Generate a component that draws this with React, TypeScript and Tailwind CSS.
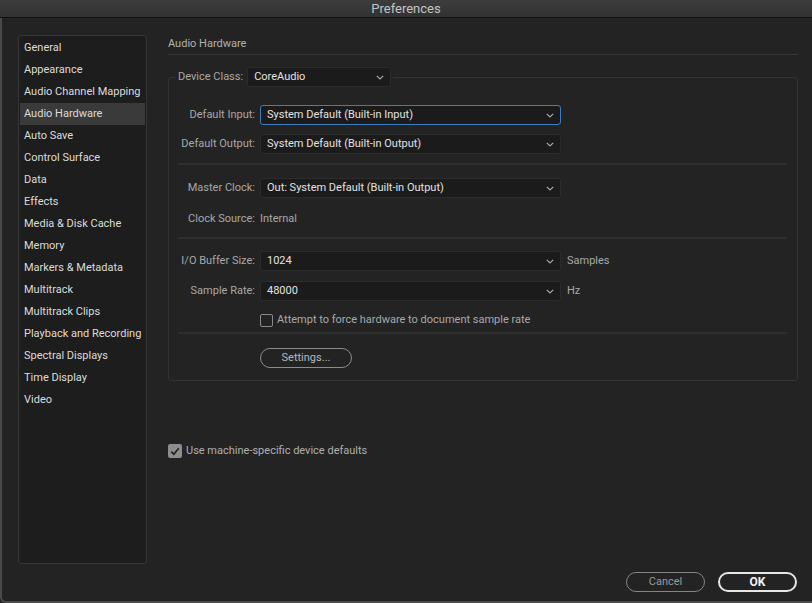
import type { ReactNode } from 'react';

const font = { fontFamily: 'Roboto, "Liberation Sans", sans-serif' };

const sections = [
  'General',
  'Appearance',
  'Audio Channel Mapping',
  'Audio Hardware',
  'Auto Save',
  'Control Surface',
  'Data',
  'Effects',
  'Media & Disk Cache',
  'Memory',
  'Markers & Metadata',
  'Multitrack',
  'Multitrack Clips',
  'Playback and Recording',
  'Spectral Displays',
  'Time Display',
  'Video',
];

function Chevron() {
  return (
    <svg width="8" height="5" viewBox="0 0 8 5" className="shrink-0">
      <path d="M0.8 0.8 L4 4 L7.2 0.8" fill="none" stroke="#a8a8a8" strokeWidth="1.2" />
    </svg>
  );
}

function Select({ value, width, focused }: { value: string; width: string; focused?: boolean }) {
  return (
    <div
      className={`${width} h-[20px] flex items-center justify-between pl-[6px] pr-[6px] rounded-[3px] bg-[#1b1b1b] border text-[11px] text-[#e2e2e2] ${
        focused ? 'border-[#3b7dc4]' : 'border-[#2c2c2c]'
      }`}
    >
      <span className="whitespace-nowrap">{value}</span>
      <Chevron />
    </div>
  );
}

function Row({ label, children, className = '' }: { label: string; children: ReactNode; className?: string }) {
  return (
    <div className={`flex items-center h-[20px] ${className}`}>
      <div className="w-[77px] shrink-0 text-right whitespace-nowrap text-[11px] text-[#a8a8a8]">{label}</div>
      <div className="ml-[5px] flex items-center">{children}</div>
    </div>
  );
}

function Divider({ className = '' }: { className?: string }) {
  return <div className={`h-[2px] bg-[#2e2e2e] mr-[10px] ${className}`} />;
}

export default function App() {
  return (
    <div className="w-[812px] h-[603px] bg-[#232323] flex flex-col overflow-hidden" style={font}>
      <div className="h-[18px] shrink-0 flex items-center justify-center bg-gradient-to-b from-[#3d3d3d] to-[#323232] border-b border-[#111] text-[13px] text-[#c4c4c4]">
        Preferences
      </div>

      <div className="flex-1 flex flex-col border-l-2 border-b-2 border-[#4a4a4a] rounded-bl-[6px]">
        <div className="flex pl-[16px] pt-[17px]">
          <div className="w-[129px] h-[529px] shrink-0 bg-[#1d1d1d] border border-[#363636] rounded-[3px] pt-[1px] px-[1px]">
            {sections.map((s) => (
              <div
                key={s}
                className={`h-[22px] flex items-center pl-[4px] text-[11px] text-[#dcdcdc] whitespace-nowrap ${
                  s === 'Audio Hardware' ? 'bg-[#3a3a3a]' : ''
                }`}
              >
                {s}
              </div>
            ))}
          </div>

          <div className="ml-[21px] w-[630px]">
            <div className="h-[20px] flex items-center text-[11px] text-[#b2b2b2] border-b border-[#363636]">
              Audio Hardware
            </div>

            <fieldset className="mt-[11px] h-[315px] border border-[#333] rounded-[3px] pl-[9px]">
              <legend className="ml-[-2px] px-[2px] h-[22px] flex items-center">
                <span className="text-[11px] text-[#a8a8a8]">Device Class:</span>
                <div className="ml-[4px]">
                  <Select value="CoreAudio" width="w-[144px]" />
                </div>
              </legend>

              <Row label="Default Input:" className="mt-[17px]">
                <Select value="System Default (Built-in Input)" width="w-[301px]" focused />
              </Row>
              <Row label="Default Output:" className="mt-[9px]">
                <Select value="System Default (Built-in Output)" width="w-[301px]" />
              </Row>

              <Divider className="mt-[9px]" />

              <Row label="Master Clock:" className="mt-[13px]">
                <Select value="Out: System Default (Built-in Output)" width="w-[301px]" />
              </Row>
              <Row label="Clock Source:" className="mt-[11px]">
                <span className="text-[11px] text-[#a8a8a8]">Internal</span>
              </Row>

              <Divider className="mt-[8px]" />

              <Row label="I/O Buffer Size:" className="mt-[12px]">
                <Select value="1024" width="w-[301px]" />
                <span className="ml-[6px] text-[11px] text-[#a8a8a8]">Samples</span>
              </Row>
              <Row label="Sample Rate:" className="mt-[10px]">
                <Select value="48000" width="w-[301px]" />
                <span className="ml-[6px] text-[11px] text-[#a8a8a8]">Hz</span>
              </Row>
              <div className="mt-[11px] ml-[82px] flex items-center h-[16px]">
                <div className="w-[13px] h-[13px] border-[1.5px] border-[#8a8a8a] rounded-[2px]" />
                <span className="ml-[4px] text-[11px] text-[#a8a8a8]">Attempt to force hardware to document sample rate</span>
              </div>

              <Divider className="mt-[4px]" />

              <div className="mt-[14px] ml-[82px]">
                <div className="w-[92px] h-[20px] rounded-full border-[1.5px] border-[#8c8c8c] flex items-center justify-center text-[11px] text-[#b8b8b8]">
                  Settings...
                </div>
              </div>
            </fieldset>

            <div className="mt-[62px] flex items-center">
              <div className="w-[14px] h-[14px] rounded-[2px] bg-[#8d8d8d] flex items-center justify-center">
                <svg width="10" height="9" viewBox="0 0 10 9">
                  <path d="M1.3 4.6 L3.9 7.2 L8.7 1.3" fill="none" stroke="#222" strokeWidth="1.7" />
                </svg>
              </div>
              <span className="ml-[4px] text-[11px] text-[#b0b0b0]">Use machine-specific device defaults</span>
            </div>
          </div>
        </div>

        <div className="flex justify-end gap-[13px] pr-[15px] mt-[8px]">
          <div className="w-[79px] h-[20px] rounded-full border-[1.5px] border-[#858585] flex items-center justify-center text-[11px] text-[#9a9a9a]">
            Cancel
          </div>
          <div className="w-[79px] h-[20px] rounded-full border-2 border-[#e6e6e6] flex items-center justify-center text-[12px] font-bold text-[#f2f2f2]">
            OK
          </div>
        </div>
      </div>
    </div>
  );
}
